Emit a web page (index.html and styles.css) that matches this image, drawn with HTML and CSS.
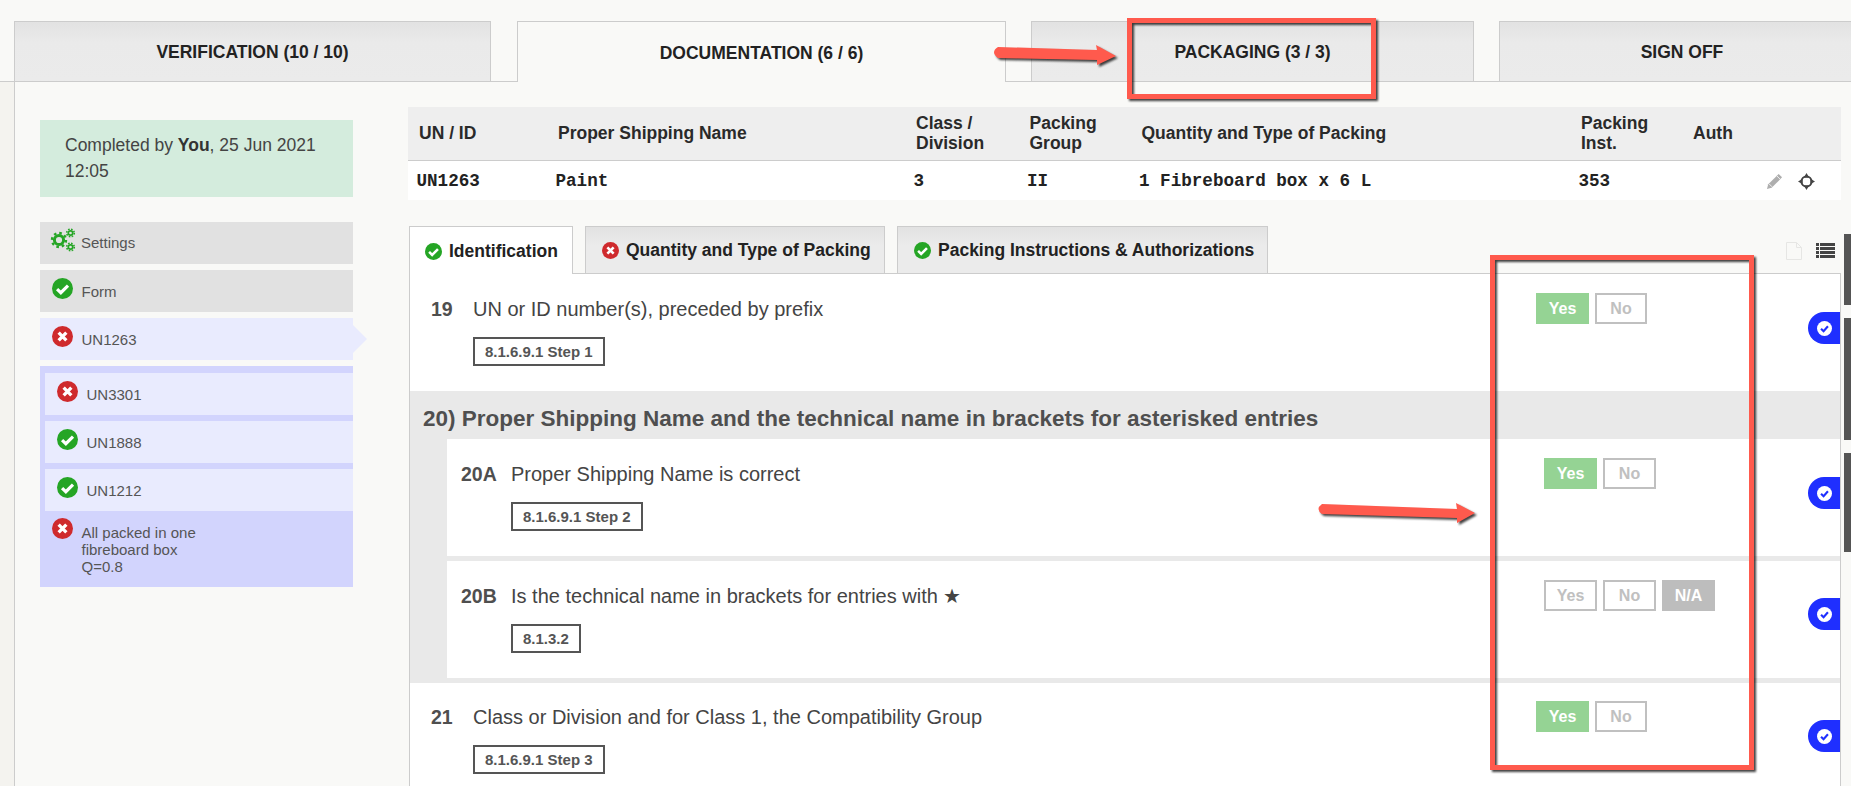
FILE: index.html
```html
<!DOCTYPE html>
<html lang="en">
<head>
<meta charset="utf-8">
<title>Documentation</title>
<link rel="stylesheet" href="styles.css">
</head>
<body>
<svg class="defs" width="0" height="0" aria-hidden="true">
  <symbol id="ok" viewBox="0 0 24 24"><circle cx="12" cy="12" r="12" fill="#25a525"/><path d="M5.8 12.6l4.3 4.2 8.2-8.2" fill="none" stroke="#fff" stroke-width="3.6"/></symbol>
  <symbol id="bad" viewBox="0 0 24 24"><circle cx="12" cy="12" r="12" fill="#cf2a2d"/><path d="M7.6 7.6l8.8 8.8M16.4 7.6l-8.8 8.8" fill="none" stroke="#fff" stroke-width="3.8"/></symbol>
  <symbol id="flagcheck" viewBox="0 0 24 24"><circle cx="12" cy="12" r="12" fill="#fff"/><path d="M6.5 12.5l4 4 7-8" fill="none" stroke="#1f2fff" stroke-width="3.4"/></symbol>
</svg>

<nav class="tabs">
  <a class="tab tab-a">VERIFICATION (10 / 10)</a>
  <a class="tab tab-b active">DOCUMENTATION (6 / 6)</a>
  <a class="tab tab-c">PACKAGING (3 / 3)</a>
  <a class="tab tab-d">SIGN OFF</a>
</nav>

<div class="main">
  <aside class="sidebar">
    <div class="done">Completed by <b>You</b>, 25 Jun 2021 12:05</div>
    <div class="item grey settings">
      <svg class="gears" viewBox="0 0 26 24" aria-hidden="true">
        <g fill="none" stroke="#25a525">
          <circle cx="9" cy="12" r="4.6" stroke-width="3"/>
          <circle cx="9" cy="12" r="7" stroke-width="2.4" stroke-dasharray="2.6 2.9"/>
          <circle cx="20.5" cy="5" r="2.2" stroke-width="1.7"/>
          <circle cx="20.5" cy="5" r="3.8" stroke-width="1.6" stroke-dasharray="1.6 1.4"/>
          <circle cx="20.5" cy="19" r="2.2" stroke-width="1.7"/>
          <circle cx="20.5" cy="19" r="3.8" stroke-width="1.6" stroke-dasharray="1.6 1.4"/>
        </g>
      </svg>
      <span>Settings</span>
    </div>
    <div class="item grey"><svg class="ico"><use href="#ok"/></svg><span>Form</span></div>
    <div class="item current"><svg class="ico"><use href="#bad"/></svg><span>UN1263</span></div>
    <div class="group">
      <div class="item sub"><svg class="ico"><use href="#bad"/></svg><span>UN3301</span></div>
      <div class="item sub"><svg class="ico"><use href="#ok"/></svg><span>UN1888</span></div>
      <div class="item sub"><svg class="ico"><use href="#ok"/></svg><span>UN1212</span></div>
      <div class="note"><svg class="ico"><use href="#bad"/></svg><span>All packed in one<br>fibreboard box<br>Q=0.8</span></div>
    </div>
  </aside>

  <section class="content">
    <div class="sheet">
      <div class="sheet-head">
        <div>UN / ID</div><div>Proper Shipping Name</div><div>Class /<br>Division</div><div>Packing<br>Group</div><div>Quantity and Type of Packing</div><div>Packing<br>Inst.</div><div>Auth</div>
      </div>
      <div class="sheet-row">
        <div>UN1263</div><div>Paint</div><div>3</div><div>II</div><div>1 Fibreboard box x 6 L</div><div>353</div>
        <div class="actions">
          <svg class="act" viewBox="0 0 18 18" aria-hidden="true"><path d="M13.400 1l3.600 3.600L6 15.600 1 17l1.400-5z" fill="#aeaeae"/><path d="M11.400 3l3.600 3.600" stroke="#f4f4f4" stroke-width="1"/><path d="M3.400 11.600l3 3" stroke="#f4f4f4" stroke-width="1"/></svg>
          <svg class="act" viewBox="0 0 18 18" aria-hidden="true"><circle cx="9" cy="9" r="5.500" fill="none" stroke="#444" stroke-width="1.800"/><path d="M9 0l3 5H6zM9 18l3-5H6zM0 9l5-3v6zM18 9l-5-3v6z" fill="#444"/></svg>
        </div>
      </div>
    </div>

    <div class="subtabs">
      <a class="subtab sub-a on"><svg class="mini"><use href="#ok"/></svg>Identification</a>
      <a class="subtab sub-b"><svg class="mini"><use href="#bad"/></svg>Quantity and Type of Packing</a>
      <a class="subtab sub-c"><svg class="mini"><use href="#ok"/></svg>Packing Instructions &amp; Authorizations</a>
      <div class="tools">
        <svg class="file" viewBox="0 0 16 18" aria-hidden="true"><path d="M.5.5h10l5 5v12H.5zM10.500.5v5h5" fill="none" stroke="#e6e6e4"/></svg>
        <svg class="list" viewBox="0 0 19 15" aria-hidden="true"><path d="M0 0h3v3H0zM4 0h15v3H4zM0 4h3v3H0zM4 4h15v3H4zM0 8h3v3H0zM4 8h15v3H4zM0 12h3v3H0zM4 12h15v3H4z" fill="#444"/></svg>
      </div>
    </div>

    <div class="panel">
      <article class="q q-top">
        <div class="q-body"><b class="num">19</b><div><p class="q-text">UN or ID number(s), preceded by prefix</p><span class="ref">8.1.6.9.1 Step 1</span></div></div>
        <div class="answers"><span class="btn yes">Yes</span><span class="btn">No</span></div>
        <span class="flag f39"><svg class="flag-ico"><use href="#flagcheck"/></svg></span>
      </article>

      <div class="group-q">
        <h2 class="group-title">20) Proper Shipping Name and the technical name in brackets for asterisked entries</h2>
        <div class="subrows">
          <article class="q q-sub q-20a">
            <div class="q-body"><b class="num">20A</b><div><p class="q-text">Proper Shipping Name is correct</p><span class="ref">8.1.6.9.1 Step 2</span></div></div>
            <div class="answers"><span class="btn yes">Yes</span><span class="btn">No</span></div>
            <span class="flag f38"><svg class="flag-ico"><use href="#flagcheck"/></svg></span>
          </article>
          <article class="q q-sub q-20b">
            <div class="q-body"><b class="num">20B</b><div><p class="q-text">Is the technical name in brackets for entries with ★</p><span class="ref">8.1.3.2</span></div></div>
            <div class="answers"><span class="btn">Yes</span><span class="btn">No</span><span class="btn na">N/A</span></div>
            <span class="flag f37"><svg class="flag-ico"><use href="#flagcheck"/></svg></span>
          </article>
        </div>
      </div>

      <article class="q q-top q-21">
        <div class="q-body"><b class="num">21</b><div><p class="q-text">Class or Division and for Class 1, the Compatibility Group</p><span class="ref">8.1.6.9.1 Step 3</span></div></div>
        <div class="answers"><span class="btn yes">Yes</span><span class="btn">No</span></div>
        <span class="flag f37"><svg class="flag-ico"><use href="#flagcheck"/></svg></span>
      </article>
    </div>
  </section>

  <div class="strips"><i class="s1"></i><i class="s2"></i><i class="s3"></i></div>
</div>

<svg class="marks" width="1851" height="786" viewBox="0 0 1851 786" aria-hidden="true">
  <g fill="none" stroke="#ff5a4d" stroke-width="5">
    <rect x="1129.500" y="20.500" width="244" height="76"/>
    <rect x="1492.500" y="257.500" width="259" height="510"/>
  </g>
  <g fill="#ff5a4d">
    <path d="M998 47L1097 50L1096 45L1116 56L1097 65L1097 60L998 58Q990 52 998 47Z"/>
    <path d="M1322 504L1457 509L1456 503L1475 513L1457 523L1457 518L1322 514Q1315 509 1322 504Z"/>
  </g>
</svg>
</body>
</html>
```

FILE: styles.css
```css
* { box-sizing: border-box; }
html, body { margin: 0; height: 786px; overflow: hidden; }
body {
  background: #f4f3ef;
  font-family: "Liberation Sans", Arial, sans-serif;
  color: #444;
  position: relative;
}
.defs { position: absolute; }

/* top tabs */
.tabs {
  display: flex;
  height: 82px;
  padding: 21px 0 0 14px;
  background: #f9f9f7;
  border-bottom: 1px solid #ccc;
}
.tab {
  height: 61px;
  flex: none;
  display: flex;
  align-items: center;
  justify-content: center;
  padding-top: 2px;
  font-size: 17.500px;
  font-weight: 700;
  color: #222;
  background: linear-gradient(#e2e2e2, #eaeaea 35%, #ebebeb);
  border: 1px solid #ccc;
}
.tab-a { width: 477px; margin-right: 26px; }
.tab-b { width: 489px; margin-right: 25px; }
.tab-c { width: 443px; margin-right: 25px; }
.tab-d { width: 366px; }
.tab.active { background: #f9f9f7; border-bottom: 0; }

/* main */
.main {
  display: flex;
  margin-left: 14px;
  height: 704px;
  overflow: hidden;
  background: #f9f9f7;
  border-left: 1px solid #ccc;
}

/* sidebar */
.sidebar {
  width: 313px;
  flex: none;
  margin: 38px 55px 0 25px;
  display: flex;
  flex-direction: column;
  gap: 6px;
  font-size: 15px;
  color: #555;
}
.done {
  height: 77px;
  margin-bottom: 19px;
  padding: 12px 20px 0 25px;
  font-size: 17.500px;
  line-height: 26px;
  color: #444;
  background: #d4ecdd;
}
.done b { color: #333; }
.item {
  height: 42px;
  flex: none;
  display: flex;
  align-items: center;
  gap: 8.500px;
  padding-left: 12px;
  position: relative;
}
.grey { background: #e1e1e1; }
.current { background: #e9ebfe; }
.current::after {
  content: "";
  position: absolute;
  left: 100%;
  top: 7px;
  border-left: 14px solid #e9ebfe;
  border-top: 14px solid transparent;
  border-bottom: 14px solid transparent;
}
.ico { width: 21px; height: 21px; margin-top: -5px; flex: none; }
.gears { width: 26px; height: 24px; margin: -6px -3.500px 0 -2px; flex: none; }
.settings span { margin-top: -1px; }
.group {
  display: flex;
  flex-direction: column;
  gap: 6px;
  height: 221px;
  flex: none;
  padding-top: 7px;
  background: #d2d4fd;
}
.sub { margin-left: 5px; background: #e9ebfe; }
.note {
  display: flex;
  gap: 8.500px;
  padding: 7px 0 0 12px;
  line-height: 17px;
  margin-top: -6px;
}
.note .ico { margin-top: 0; }
.note span { padding-top: 6px; }

/* content */
.content { width: 1433px; flex: none; padding-top: 25px; }
.sheet { font-size: 17.500px; }
.sheet-head, .sheet-row {
  display: grid;
  grid-template-columns: 139px 358px 113.500px 112px 439.500px 112px 1fr;
  align-items: center;
}
.sheet-head {
  height: 54px;
  padding-left: 11px;
  padding-bottom: 1px;
  line-height: 20px;
  font-weight: 700;
  color: #2a2a2a;
  background: #eee;
  border-bottom: 1px solid #ccc;
}
.sheet-row {
  height: 39px;
  padding-left: 8.500px;
  padding-top: 1px;
  font-family: "Liberation Mono", "Courier New", monospace;
  font-size: 17.600px;
  font-weight: 700;
  color: #222;
  background: #fff;
}
.actions {
  display: flex;
  justify-content: flex-end;
  gap: 15px;
  padding-right: 26px;
}
.act { width: 17px; height: 17px; }

/* subtabs */
.subtabs {
  display: flex;
  height: 47px;
  margin: 26px 0 0 1px;
  gap: 12px;
}
.subtab {
  display: flex;
  align-items: center;
  gap: 7px;
  height: 48px;
  flex: none;
  padding-top: 1px;
  white-space: nowrap;
  position: relative;
  z-index: 1;
  font-size: 17.500px;
  font-weight: 700;
  color: #222;
  background: linear-gradient(#e2e2e2, #ebebeb 40%);
  border: 1px solid #ccc;
}
.subtab.on { background: #fff; border-bottom: 0; }
.sub-a { width: 164px; padding-left: 15px; }
.sub-b { width: 300px; padding-left: 16px; }
.sub-c { width: 371px; padding-left: 16px; }
.mini { width: 17px; height: 17px; flex: none; }
.tools {
  display: flex;
  gap: 14px;
  margin-left: auto;
  padding: 16px 6px 0 0;
}
.file { width: 16px; height: 18px; }
.list { width: 19px; height: 15px; margin-top: 1px; }

/* questions panel */
.panel {
  margin-left: 1px;
  height: 513px;
  overflow: hidden;
  background: #fff;
  border: 1px solid #ccc;
  border-width: 1px 1px 0 1px;
}
.q { display: flex; }
.q-top { height: 117px; padding-top: 19px; }
.q-21 { padding-top: 18px; }
.q-sub { background: #fff; padding-top: 19px; }
.q-20a { height: 117px; }
.q-20b { height: 117px; }
.q-body { flex: 1; display: flex; }
.q-top .q-body { padding-left: 21px; }
.q-sub .q-body { padding-left: 14px; }
.num {
  font-size: 19.500px;
  line-height: 32px;
  color: #4f4f4f;
}
.q-top .num { width: 42px; }
.q-sub .num { width: 50px; }
.q-text {
  margin: 0 0 12px;
  font-size: 20px;
  line-height: 32px;
  color: #444;
}
.ref {
  display: block;
  width: fit-content;
  height: 29px;
  padding: 0 10px;
  font-size: 15px;
  font-weight: 700;
  line-height: 26px;
  color: #555;
  border: 2px solid #555;
}
.answers { display: flex; gap: 6px; align-self: flex-start; }
.q-top .answers { width: 272px; }
.q-sub .answers { width: 264px; }
.btn {
  width: 53px;
  height: 31px;
  display: flex;
  align-items: center;
  justify-content: center;
  font-size: 16px;
  font-weight: 700;
  color: #c0c0c0;
  border: 2px solid #c0c0c0;
}
.q-top .btn:not(.yes) { width: 52px; }
.btn.yes { color: #fff; background: #95d394; border-color: #95d394; }
.btn.na { color: #fff; background: #bdbdbd; border-color: #bdbdbd; }
.flag {
  width: 32px;
  height: 32px;
  flex: none;
  display: flex;
  align-items: center;
  justify-content: center;
  background: #1f2fff;
  border-radius: 16px 0 0 16px;
  align-self: flex-start;
}
.f39 { margin-top: 19px; }
.f38 { margin-top: 19px; }
.f37 { margin-top: 18px; }
.q-21 .f37 { margin-top: 19px; }
.flag-ico { width: 15px; height: 15px; }

.group-q { background: #e9e9e9; }
.group-title {
  margin: 0;
  height: 48px;
  padding: 6px 0 0 13px;
  font-size: 22.500px;
  line-height: 44px;
  font-weight: 700;
  color: #4f4f4f;
}
.subrows {
  display: flex;
  flex-direction: column;
  gap: 5px;
  padding: 0 0 5px 37px;
}

/* right-hand strips */
.strips {
  flex: none;
  width: 7px;
  margin-left: 3px;
  padding-top: 152px;
  display: flex;
  flex-direction: column;
  gap: 13px;
}
.strips i { display: block; background: #555; flex: none; }
.s1 { height: 71px; }
.s2 { height: 122px; }
.s3 { height: 99px; }

/* annotation overlay */
.marks {
  position: absolute;
  left: 0;
  top: 0;
  pointer-events: none;
  filter: drop-shadow(2px 2px 1px rgba(0, 0, 0, .75));
}
```
